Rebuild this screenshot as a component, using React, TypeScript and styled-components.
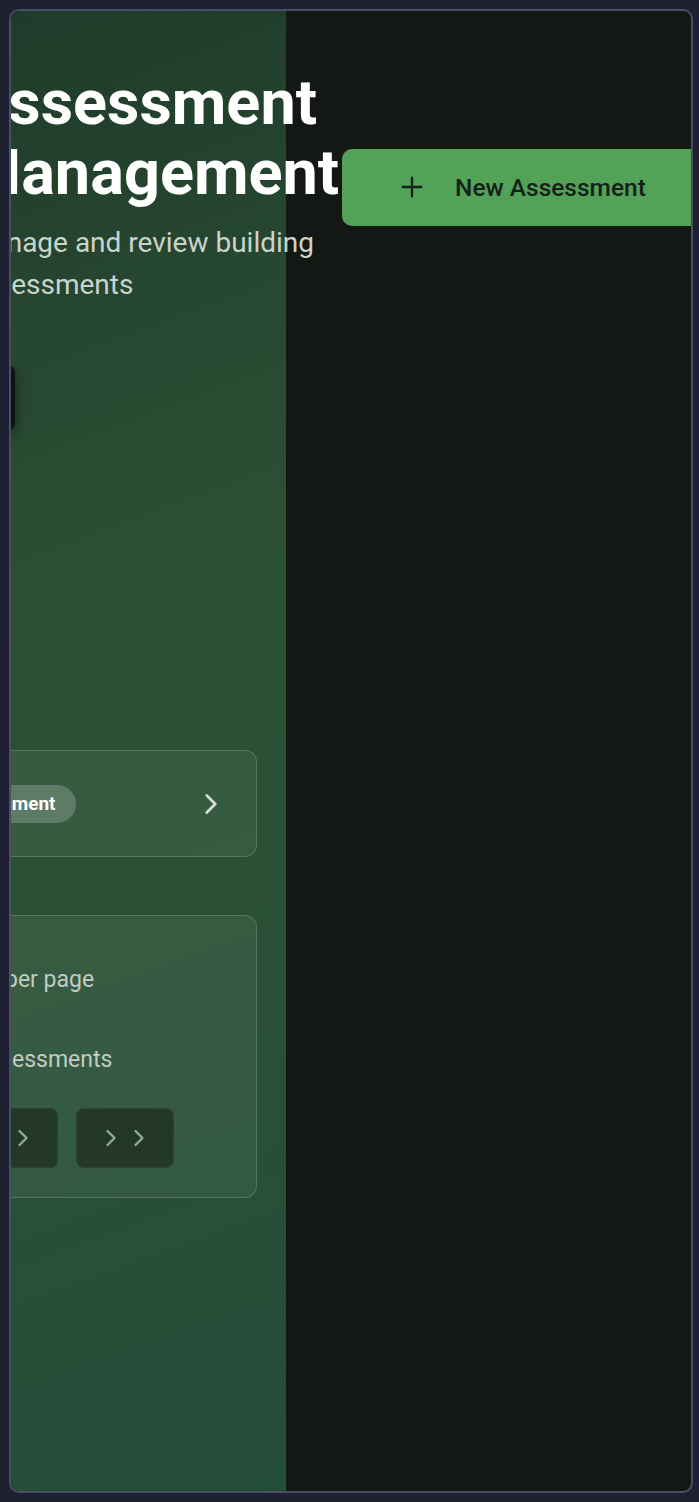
import React from "react";
import styled, { createGlobalStyle } from "styled-components";
import { ChevronRight, ChevronLeft, Plus } from "lucide-react";

const GlobalStyle = createGlobalStyle`
  html, body {
    margin: 0;
    padding: 0;
    background: #1d2132;
  }
  body {
    padding: 9px 6px 9px 9px;
    box-sizing: border-box;
    font-family: Roboto, "Noto Sans", Arial, sans-serif;
  }
  * {
    box-sizing: border-box;
  }
`;

const Frame = styled.div`
  height: calc(100vh - 18px);
  border: 2px solid #4a4e62;
  border-radius: 10px;
  background: #131814;
  overflow: hidden;
`;

const GreenPanel = styled.section`
  width: 275px;
  height: 100%;
  background: linear-gradient(160deg, #1f3b2b 0%, #2b5034 38%, #2a5136 62%, #234d3b 100%);
`;

const Content = styled.div`
  margin-left: -45px;
  padding-top: 57px;
  width: max-content;
  display: flex;
  flex-direction: column;
`;

const Header = styled.div`
  display: flex;
  align-items: center;
  gap: 2px;
`;

const TitleBlock = styled.div`
  width: 374px;
`;

const Title = styled.h1`
  margin: 0;
  color: #ffffff;
  font-size: 63px;
  line-height: 70px;
  font-weight: 700;
  white-space: nowrap;
`;

const Subtitle = styled.p`
  margin: 14px 0 0 1px;
  color: #cad3cd;
  font-size: 28px;
  line-height: 42px;
  font-weight: 400;
`;

const PrimaryButton = styled.button`
  display: flex;
  align-items: center;
  gap: 27px;
  height: 77px;
  padding: 0 60px 0 54px;
  border: none;
  border-radius: 10px;
  background: #52a257;
  color: #14201a;
  font-family: Roboto, Arial, sans-serif;
  font-size: 24.5px;
  font-weight: 500;
  white-space: nowrap;
`;

const FilterBar = styled.div`
  margin-top: 59px;
  width: 49px;
  height: 66px;
  border-radius: 8px;
  background: #0f1311;
  box-shadow: 0 4px 14px rgba(0, 0, 0, 0.45);
`;

const CardList = styled.div`
  margin-top: 319px;
  margin-left: -95px;
  width: 386px;
  display: flex;
  flex-direction: column;
  gap: 58px;
`;

const Card = styled.div<{ $compact?: boolean }>`
  border: 1px solid rgba(255, 255, 255, 0.17);
  border-radius: 12px;
  background: rgba(255, 255, 255, 0.06);
  padding: ${(p) => (p.$compact ? "0 28px" : "32px 28px 29px")};
  height: ${(p) => (p.$compact ? "107px" : "auto")};
  display: flex;
  flex-direction: ${(p) => (p.$compact ? "row" : "column")};
  align-items: ${(p) => (p.$compact ? "center" : "flex-start")};
  gap: ${(p) => (p.$compact ? "0" : "31px")};
`;

const Pill = styled.span`
  height: 38px;
  line-height: 38px;
  padding: 0 20px 0 14px;
  border-radius: 19px;
  background: rgba(255, 255, 255, 0.2);
  color: #ffffff;
  font-size: 19px;
  font-weight: 700;
  white-space: nowrap;
`;

const RowArrow = styled.span`
  margin-left: auto;
  display: flex;
  color: #d3dbd5;
`;

const Row = styled.div`
  display: flex;
  align-items: center;
  gap: 12px;
`;

const Select = styled.div`
  width: 93px;
  height: 64px;
  border-radius: 8px;
  background: #243829;
`;

const MutedText = styled.span`
  color: #c2cbc5;
  font-size: 23px;
  line-height: 34px;
  white-space: nowrap;
`;

const Pager = styled.div`
  display: flex;
  gap: 18px;
`;

const PageButton = styled.button`
  display: flex;
  align-items: center;
  justify-content: center;
  height: 60px;
  padding: 0 20px;
  border: 1px solid rgba(255, 255, 255, 0.05);
  border-radius: 8px;
  background: #243829;
  color: #8eac96;
`;

const App: React.FC = () => {
  return (
    <>
      <GlobalStyle />
      <Frame>
        <GreenPanel>
          <Content>
            <Header>
              <TitleBlock>
                <Title>Assessment</Title>
                <Title>Management</Title>
                <Subtitle>Manage and review building assessments</Subtitle>
              </TitleBlock>
              <PrimaryButton>
                <Plus size={32} strokeWidth={1.75} />
                New Assessment
              </PrimaryButton>
            </Header>

            <FilterBar />

            <CardList>
              <Card $compact>
                <Pill>Full Assessment</Pill>
                <RowArrow>
                  <ChevronRight size={34} strokeWidth={2} />
                </RowArrow>
              </Card>

              <Card>
                <Row>
                  <Select />
                  <MutedText>per page</MutedText>
                </Row>
                <MutedText>Total 8 assessments</MutedText>
                <Pager>
                  <PageButton>
                    <ChevronLeft size={28} strokeWidth={2} />
                  </PageButton>
                  <PageButton>
                    <ChevronRight size={28} strokeWidth={2} />
                  </PageButton>
                  <PageButton>
                    <ChevronRight size={28} strokeWidth={2} />
                    <ChevronRight size={28} strokeWidth={2} />
                  </PageButton>
                </Pager>
              </Card>
            </CardList>
          </Content>
        </GreenPanel>
      </Frame>
    </>
  );
};

export default App;
